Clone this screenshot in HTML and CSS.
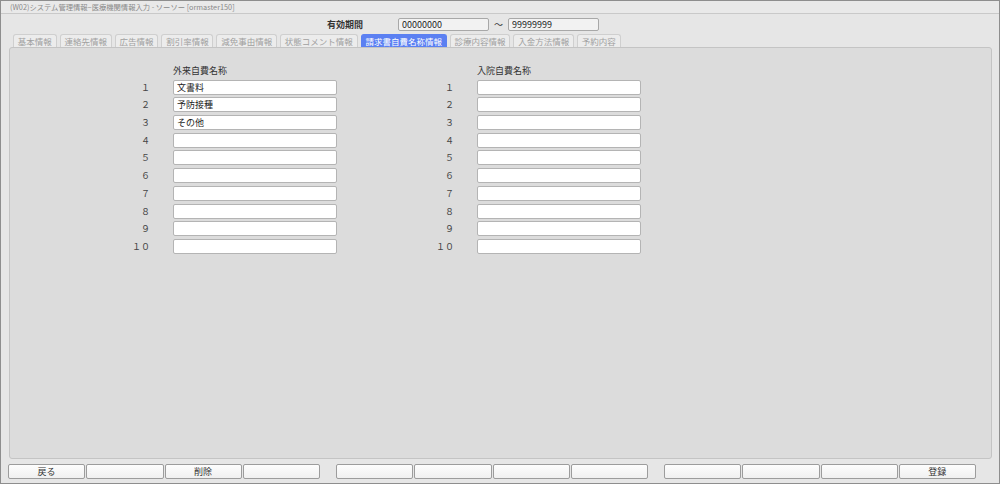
FILE: index.html
```html
<!DOCTYPE html>
<html>
<head>
    <meta charset="utf-8">
    <link rel="stylesheet" href="styles.css">
</head>
<body>
    <div class="window">
        <div class="titlebar">(W02)システム管理情報−医療機関情報入力 - ソーソー [ormaster150]</div>

        <div class="period">
            <span class="period-label">有効期間</span>
            <input class="period-input" type="text" value="00000000">
            <span class="tilde">～</span>
            <input class="period-input" type="text" value="99999999">
        </div>

        <div class="tabs">
            <div class="tab">基本情報</div>
            <div class="tab">連絡先情報</div>
            <div class="tab">広告情報</div>
            <div class="tab">割引率情報</div>
            <div class="tab">減免事由情報</div>
            <div class="tab">状態コメント情報</div>
            <div class="tab active">請求書自費名称情報</div>
            <div class="tab">診療内容情報</div>
            <div class="tab">入金方法情報</div>
            <div class="tab">予約内容</div>
        </div>

        <div class="panel">
            <div class="form">
                <div class="column">
                    <span></span><span class="col-title">外来自費名称</span>
                    <span class="num">１</span><input class="field" type="text" value="文書料">
                    <span class="num">２</span><input class="field" type="text" value="予防接種">
                    <span class="num">３</span><input class="field" type="text" value="その他">
                    <span class="num">４</span><input class="field" type="text">
                    <span class="num">５</span><input class="field" type="text">
                    <span class="num">６</span><input class="field" type="text">
                    <span class="num">７</span><input class="field" type="text">
                    <span class="num">８</span><input class="field" type="text">
                    <span class="num">９</span><input class="field" type="text">
                    <span class="num">１０</span><input class="field" type="text">
                </div>
                <div class="column">
                    <span></span><span class="col-title">入院自費名称</span>
                    <span class="num">１</span><input class="field" type="text">
                    <span class="num">２</span><input class="field" type="text">
                    <span class="num">３</span><input class="field" type="text">
                    <span class="num">４</span><input class="field" type="text">
                    <span class="num">５</span><input class="field" type="text">
                    <span class="num">６</span><input class="field" type="text">
                    <span class="num">７</span><input class="field" type="text">
                    <span class="num">８</span><input class="field" type="text">
                    <span class="num">９</span><input class="field" type="text">
                    <span class="num">１０</span><input class="field" type="text">
                </div>
            </div>
        </div>

        <div class="buttons">
            <div class="btn-group">
                <button class="btn">戻る</button>
                <button class="btn"></button>
                <button class="btn">削除</button>
                <button class="btn"></button>
            </div>
            <div class="btn-group">
                <button class="btn"></button>
                <button class="btn"></button>
                <button class="btn"></button>
                <button class="btn"></button>
            </div>
            <div class="btn-group">
                <button class="btn"></button>
                <button class="btn"></button>
                <button class="btn"></button>
                <button class="btn">登録</button>
            </div>
        </div>
    </div>
</body>
</html>
```

FILE: styles.css
```css
* {
    margin: 0;
    padding: 0;
    box-sizing: border-box;
    font-family: "Noto Sans CJK JP", "Liberation Sans", sans-serif;
}

body {
    background: #e6e6e6;
}

.window {
    width: 1000px;
    height: 484px;
    border: 1px solid #8e8e8e;
    background: #e6e6e6;
    display: flex;
    flex-direction: column;
}

.titlebar {
    height: 13px;
    line-height: 12px;
    padding-left: 9px;
    font-size: 7.3px;
    color: #8a8a8a;
    background: #e9e9e9;
    border-bottom: 1px solid #c9c9c9;
}

.period {
    height: 20px;
    display: flex;
    align-items: center;
    padding-left: 326px;
}

.period-label {
    width: 71px;
    font-size: 9px;
    font-weight: bold;
    color: #333;
}

.period-input {
    width: 91px;
    height: 13px;
    border: 1px solid #a8a8a8;
    border-radius: 2px;
    background: #f2f2f2;
    font-size: 9px;
    color: #222;
    padding-left: 3px;
    outline: none;
}

.tilde {
    width: 19px;
    text-align: center;
    font-size: 9px;
    color: #333;
}

.tabs {
    display: flex;
    gap: 3px;
    padding-left: 12px;
    height: 13px;
}

.tab {
    height: 13px;
    padding: 0 3.8px;
    font-size: 8.5px;
    line-height: 12px;
    color: #a0a0a0;
    background: #ececec;
    border: 1px solid #cfcfcf;
    border-bottom: none;
    border-radius: 3px 3px 0 0;
}

.tab.active {
    background: #5b80f2;
    border-color: #5b80f2;
    color: #fff;
}

.panel {
    height: 412px;
    margin: 0 7px 0 8px;
    background: #dcdcdc;
    border: 1px solid #c4c4c4;
    border-radius: 3px;
}

.form {
    display: flex;
    gap: 97px;
    padding: 16.5px 0 0 120px;
}

.column {
    display: grid;
    grid-template-columns: 20px 164px;
    column-gap: 23px;
    row-gap: 2.7px;
    align-items: center;
}

.col-title {
    font-size: 9px;
    color: #333;
    height: 12px;
    line-height: 12px;
    margin-bottom: 0.5px;
}

.num {
    font-size: 9px;
    color: #444;
    text-align: right;
}

.field {
    width: 164px;
    height: 15px;
    border: 1px solid #b4b4b4;
    border-radius: 2px;
    background: #fff;
    font-size: 9px;
    color: #222;
    padding-left: 3px;
    outline: none;
}

.buttons {
    display: flex;
    gap: 16px;
    padding: 5px 0 0 7px;
}

.btn-group {
    display: flex;
    gap: 1px;
}

.btn {
    width: 77.25px;
    height: 15px;
    border: 1px solid #9c9c9c;
    border-radius: 2px;
    background: linear-gradient(#fdfdfd, #f0f0f0);
    font-size: 9px;
    color: #333;
}
```
